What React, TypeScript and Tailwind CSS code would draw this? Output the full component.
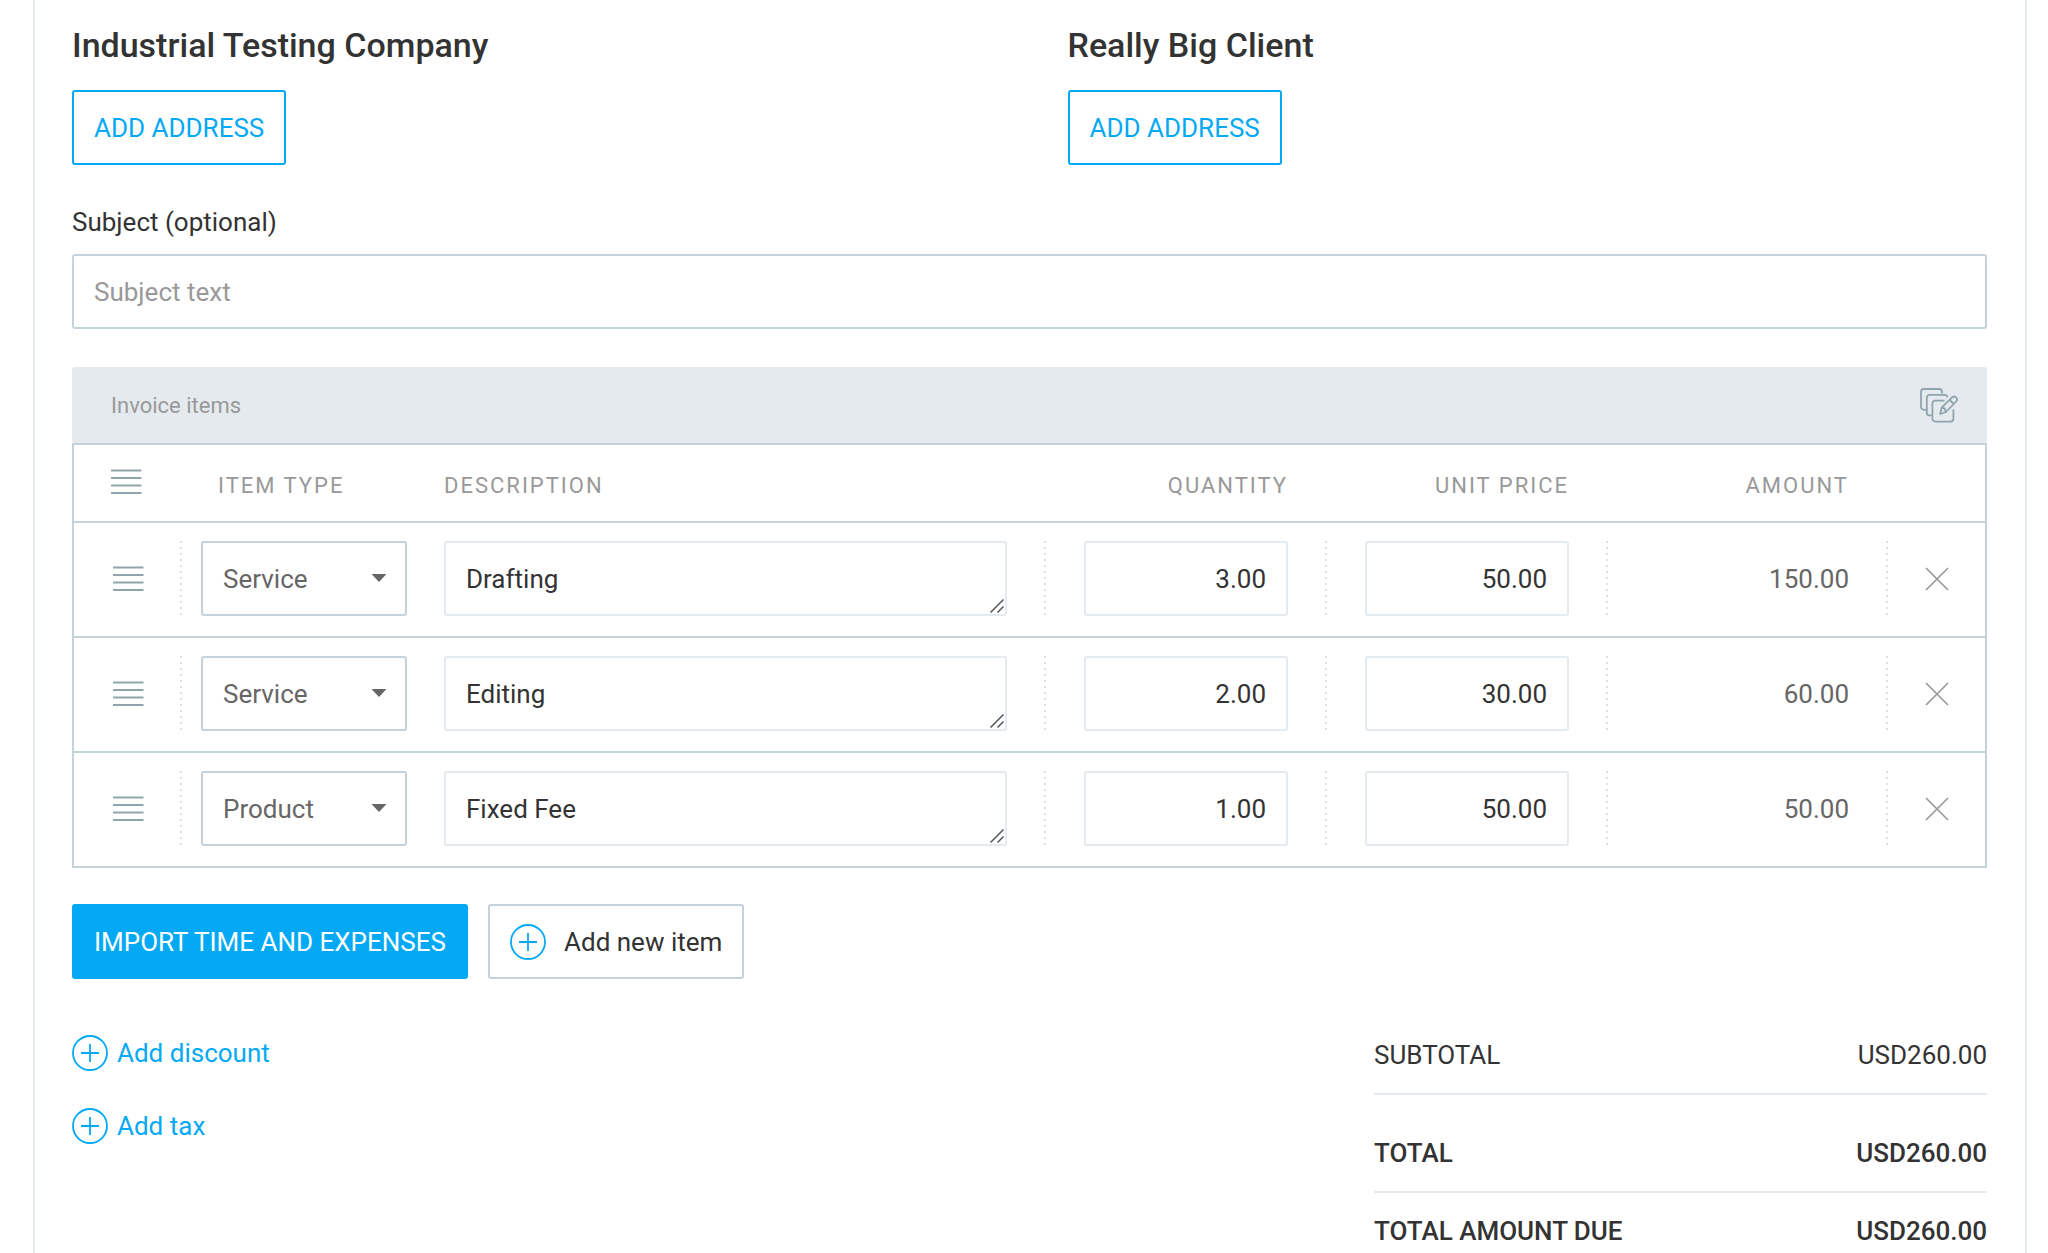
import { useState } from "react";

type Item = {
  id: number;
  type: "Service" | "Product";
  description: string;
  quantity: string;
  price: string;
};

const ITEMS: Item[] = [
  { id: 1, type: "Service", description: "Drafting", quantity: "3.00", price: "50.00" },
  { id: 2, type: "Service", description: "Editing", quantity: "2.00", price: "30.00" },
  { id: 3, type: "Product", description: "Fixed Fee", quantity: "1.00", price: "50.00" },
];

const amountOf = (item: Item) => Number(item.quantity) * Number(item.price);

function LinesIcon() {
  return (
    <svg width="31" height="26" viewBox="0 0 31 26" fill="none" stroke="#90a4ae" strokeWidth="2">
      <path d="M0 1.5h30.500M0 9h30.500M0 16.5h30.500M0 24h30.500" />
    </svg>
  );
}

function PlusCircleIcon() {
  return (
    <svg width="36" height="36" viewBox="0 0 36 36" fill="none" stroke="#03a9f4" strokeWidth="1.8">
      <circle cx="18" cy="18" r="17" />
      <path d="M18 9v18M9 18h18" />
    </svg>
  );
}

function CloseIcon() {
  return (
    <svg width="24" height="24" viewBox="0 0 24 24" fill="none" stroke="#999" strokeWidth="1.7">
      <path d="M1 1l22 22M23 1L1 23" />
    </svg>
  );
}

/* Stack of sheets with a pencil over the front one. */
function BulkEditIcon() {
  return (
    <svg
      width="38"
      height="36"
      viewBox="0 0 38 36"
      fill="none"
      stroke="#90a4ae"
      strokeWidth="1.8"
      strokeLinejoin="round"
    >
      <path d="M6 21.8H4A3 3 0 0 1 1 18.8V4a3 3 0 0 1 3-3h15a3 3 0 0 1 3 3v1.6" />
      <path d="M11.6 27.4H9.8a3 3 0 0 1-3-3V9.8a3 3 0 0 1 3-3h14.8a3 3 0 0 1 2.8 2.4" />
      <path d="M24.6 12.6H15.4a3 3 0 0 0-3 3V30.6a3 3 0 0 0 3 3h15a3 3 0 0 0 3-3V21.4" />
      <path d="M20.2 26l1.4-6.4L32 9.4a2.9 2.9 0 0 1 4.1 4.1L26 24z" />
      <path d="M29.6 11.8l4.2 4.2M21.6 19.8l3 .6 1.2 3.6" />
    </svg>
  );
}

/* Dotted rule in front of a cell. */
function Divider() {
  return (
    <span className="w-[2px] shrink-0 self-stretch bg-[repeating-linear-gradient(to_bottom,#dbe0e3_0_2px,transparent_2px_6px)]" />
  );
}

function Party({ name }: { name: string }) {
  return (
    <section>
      <h2 className="mb-6 text-[34px] leading-[42px] font-medium">{name}</h2>
      <button className="h-[75px] rounded-[3px] border-2 border-[#03a9f4] px-5 text-[#03a9f4]">
        ADD ADDRESS
      </button>
    </section>
  );
}

function ItemRow({ item, onChange, onRemove }: {
  item: Item;
  onChange: (patch: Partial<Item>) => void;
  onRemove: () => void;
}) {
  const td = "border-b-2 border-[#c6d2d9] pt-[18px] pb-5 align-top group-last:border-b-0";
  const box = "block h-[75px] w-full rounded-[3px] border-2 border-[#e4eaee] bg-white px-5";

  return (
    <tr className="group">
      <td className={td}>
        <button className="flex h-[75px] items-center pl-[39px]" aria-label="Move item">
          <LinesIcon />
        </button>
      </td>
      <td className={td}>
        <div className="flex h-[75px]">
          <Divider />
          <div className="relative mr-[37px] ml-[19px] flex-1">
            <select
              aria-label="Item type"
              value={item.type}
              onChange={(e) => onChange({ type: e.target.value as Item["type"] })}
              className="h-full w-full appearance-none rounded-[3px] border-2 border-[#c6d2d9] bg-white px-5 text-[#666]"
            >
              <option>Service</option>
              <option>Product</option>
            </select>
            <svg
              className="pointer-events-none absolute top-[33px] right-[20px]"
              width="16"
              height="8"
              viewBox="0 0 16 8"
            >
              <path d="M0.5 0h15L8 8z" fill="#666" />
            </svg>
          </div>
        </div>
      </td>
      <td className={td}>
        <div className="relative mr-[37px]">
          <textarea
            aria-label="Description"
            rows={1}
            value={item.description}
            onChange={(e) => onChange({ description: e.target.value })}
            className={`${box} resize-none overflow-hidden py-5`}
          />
          <svg
            className="pointer-events-none absolute right-[3px] bottom-[3px]"
            width="14"
            height="14"
            viewBox="0 0 14 14"
            fill="none"
            stroke="#555"
            strokeWidth="1.5"
          >
            <path d="M0.5 13.5l13-13M7.5 13.5l6-6" />
          </svg>
        </div>
      </td>
      <td className={td}>
        <div className="flex">
          <Divider />
          <div className="mr-[37px] ml-[38px] flex-1">
            <input
              aria-label="Quantity"
              value={item.quantity}
              onChange={(e) => onChange({ quantity: e.target.value })}
              className={`${box} text-right`}
            />
          </div>
        </div>
      </td>
      <td className={td}>
        <div className="flex">
          <Divider />
          <div className="mr-[37px] ml-[38px] flex-1">
            <input
              aria-label="Unit price"
              value={item.price}
              onChange={(e) => onChange({ price: e.target.value })}
              className={`${box} text-right`}
            />
          </div>
        </div>
      </td>
      <td className={td}>
        <div className="flex h-[75px] items-center justify-between pr-[37px] text-[#666]">
          <Divider />
          {amountOf(item).toFixed(2)}
        </div>
      </td>
      <td className={td}>
        <div className="flex h-[75px]">
          <Divider />
          <button className="flex flex-1 items-center justify-center" aria-label="Remove item" onClick={onRemove}>
            <CloseIcon />
          </button>
        </div>
      </td>
    </tr>
  );
}

export default function App() {
  const [items, setItems] = useState(ITEMS);
  const [subject, setSubject] = useState("");

  const total = `USD${items.reduce((sum, item) => sum + amountOf(item), 0).toFixed(2)}`;
  const th = "h-[78px] border-b-2 border-[#c6d2d9] p-0 pt-[6px] font-normal";

  const update = (id: number, patch: Partial<Item>) =>
    setItems(items.map((item) => (item.id === id ? { ...item, ...patch } : item)));

  const addItem = () =>
    setItems([
      ...items,
      { id: Date.now(), type: "Service", description: "", quantity: "1.00", price: "0.00" },
    ]);

  return (
    <div className="min-h-screen bg-white pr-[21px] pl-[33px] font-[Roboto,sans-serif] text-[26px] leading-8 text-[#333]">
      <main className="min-h-screen border-x-2 border-[#e4eaee] pt-6 pr-[38px] pl-[37px]">
        <div className="grid grid-cols-2 gap-x-[76px]">
          <Party name="Industrial Testing Company" />
          <Party name="Really Big Client" />
        </div>

        <label htmlFor="subject" className="mt-[41px] mb-4 block">
          Subject (optional)
        </label>
        <input
          id="subject"
          value={subject}
          onChange={(e) => setSubject(e.target.value)}
          placeholder="Subject text"
          className="block h-[75px] w-full rounded-[3px] border-2 border-[#c6d2d9] px-5 placeholder:text-[#999]"
        />

        <div className="mt-[38px] flex h-[76px] items-center justify-between rounded-[3px] bg-[#e4eaee] pt-[2px] pr-[29px] pl-[39px]">
          <h3 className="text-[22px] text-[#999]">Invoice items</h3>
          <button aria-label="Edit items in bulk">
            <BulkEditIcon />
          </button>
        </div>

        <table className="w-full table-fixed border-separate border-spacing-0 border-2 border-[#c6d2d9]">
          <colgroup>
            <col className="w-[106px]" />
            <col className="w-[264px]" />
            <col />
            <col className="w-[281px]" />
            <col className="w-[281px]" />
            <col className="w-[280px]" />
            <col className="w-[99px]" />
          </colgroup>
          <thead className="text-[22px] tracking-[2px] text-[#999]">
            <tr>
              <th className={`${th} pb-2 pl-[37px]`} aria-label="Order">
                <LinesIcon />
              </th>
              <th className={`${th} pl-[38px] text-left`}>ITEM TYPE</th>
              <th className={`${th} text-left`}>DESCRIPTION</th>
              <th className={`${th} pr-[37px] text-right`}>QUANTITY</th>
              <th className={`${th} pr-[37px] text-right`}>UNIT PRICE</th>
              <th className={`${th} pr-[37px] text-right`}>AMOUNT</th>
              <th className={th} aria-label="Remove" />
            </tr>
          </thead>
          <tbody>
            {items.map((item) => (
              <ItemRow
                key={item.id}
                item={item}
                onChange={(patch) => update(item.id, patch)}
                onRemove={() => setItems(items.filter((other) => other.id !== item.id))}
              />
            ))}
          </tbody>
        </table>

        <div className="mt-9 flex gap-5">
          <button className="h-[75px] rounded-[3px] bg-[#03a9f4] px-[22px] text-white">
            IMPORT TIME AND EXPENSES
          </button>
          <button
            onClick={addItem}
            className="flex h-[75px] items-center gap-[18px] rounded-[3px] border-2 border-[#c6d2d9] px-5"
          >
            <PlusCircleIcon />
            Add new item
          </button>
        </div>

        <div className="mt-14 flex items-start justify-between">
          <div className="flex flex-col items-start gap-[37px] text-[#03a9f4]">
            <button className="flex h-9 items-center gap-[9px]">
              <PlusCircleIcon />
              Add discount
            </button>
            <button className="flex h-9 items-center gap-[9px]">
              <PlusCircleIcon />
              Add tax
            </button>
          </div>

          <dl className="w-[613px] leading-10">
            <div className="flex justify-between border-b-2 border-[#e4eaee] pb-[18px]">
              <dt>SUBTOTAL</dt>
              <dd>{total}</dd>
            </div>
            <div className="flex justify-between border-b-2 border-[#e4eaee] pt-[38px] pb-[18px] font-medium">
              <dt>TOTAL</dt>
              <dd>{total}</dd>
            </div>
            <div className="flex justify-between pt-[18px] font-medium">
              <dt>TOTAL AMOUNT DUE</dt>
              <dd>{total}</dd>
            </div>
          </dl>
        </div>
      </main>
    </div>
  );
}
